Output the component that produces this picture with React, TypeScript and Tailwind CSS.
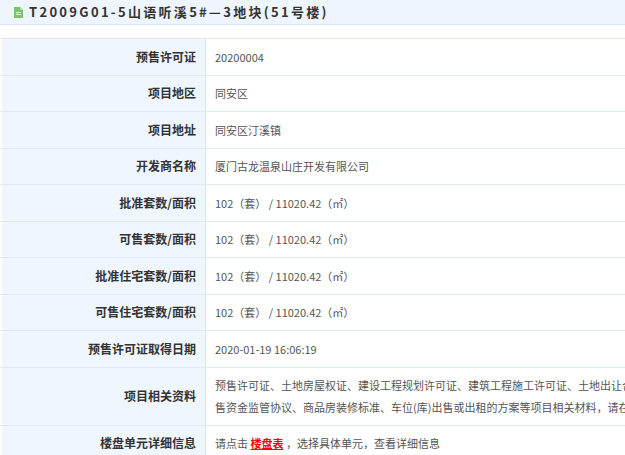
export default function App() {
  const rows: [string, React.ReactNode, number?][] = [
    ["预售许可证", "20200004"],
    ["项目地区", "同安区"],
    ["项目地址", "同安区汀溪镇"],
    ["开发商名称", "厦门古龙温泉山庄开发有限公司"],
    ["批准套数/面积", "102（套） / 11020.42（㎡）"],
    ["可售套数/面积", "102（套） / 11020.42（㎡）"],
    ["批准住宅套数/面积", "102（套） / 11020.42（㎡）"],
    ["可售住宅套数/面积", "102（套） / 11020.42（㎡）"],
    ["预售许可证取得日期", "2020-01-19 16:06:19"],
    [
      "项目相关资料",
      <div className="leading-[22px]">
        <div>预售许可证、土地房屋权证、建设工程规划许可证、建筑工程施工许可证、土地出让合同、</div>
        <div>售资金监管协议、商品房装修标准、车位(库)出售或出租的方案等项目相关材料，请在售楼处查阅</div>
      </div>,
      58,
    ],
    [
      "楼盘单元详细信息",
      <span>
        请点击 <span className="text-[#ff0000] font-bold underline">楼盘表</span> ，选择具体单元，查看详细信息
      </span>,
    ],
  ];
  return (
    <div className="w-[625px] h-[455px] overflow-hidden bg-white" style={{ fontFamily: '"Microsoft YaHei", "Noto Sans CJK SC", sans-serif' }}>
      <div className="h-[25px] bg-[#eef5fd] border-b border-[#d5e3f3] flex items-center pl-[14px] whitespace-nowrap">
        <svg width="9" height="11" viewBox="0 0 9 11" className="mr-[6px]">
          <path d="M0 0h6l3 3v8H0z" fill="#7cc46b" />
          <path d="M6 0v3h3" fill="#b8e2ae" />
          <rect x="2" y="5" width="5" height="1" fill="#e8f6e4" />
          <rect x="2" y="7" width="5" height="1" fill="#e8f6e4" />
        </svg>
        <span className="text-[13px] font-bold text-[#333] tracking-[2.3px]">T2009G01-5山语听溪5#—3地块(51号楼)</span>
      </div>
      <div className="h-[13px]" />
      <div className="w-[700px] border-t border-[#e8e6dc]">
        {rows.map(([k, v, h], i) => (
          <div key={i} className="flex border-b border-[#e3e8ee]" style={{ height: h ?? 36.5 }}>
            <div className="w-[206px] shrink-0 bg-[#f0f6fe] border-r border-[#e3e8ee] border-l-2 border-l-white flex items-center justify-end pr-[9px] text-[12px] font-bold text-[#333]">
              {k}
            </div>
            <div className="flex-1 flex items-center pl-[9px] text-[11px] text-[#555] whitespace-nowrap">{v}</div>
          </div>
        ))}
      </div>
    </div>
  );
}
